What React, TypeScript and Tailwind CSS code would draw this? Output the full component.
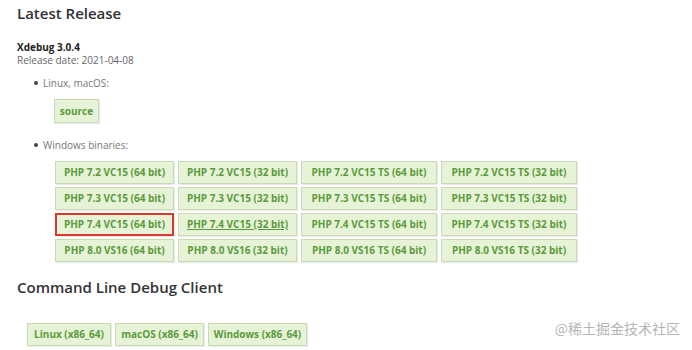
const rows = [
  ["PHP 7.2 VC15 (64 bit)", "PHP 7.2 VC15 (32 bit)", "PHP 7.2 VC15 TS (64 bit)", "PHP 7.2 VC15 TS (32 bit)"],
  ["PHP 7.3 VC15 (64 bit)", "PHP 7.3 VC15 (32 bit)", "PHP 7.3 VC15 TS (64 bit)", "PHP 7.3 VC15 TS (32 bit)"],
  ["PHP 7.4 VC15 (64 bit)", "PHP 7.4 VC15 (32 bit)", "PHP 7.4 VC15 TS (64 bit)", "PHP 7.4 VC15 TS (32 bit)"],
  ["PHP 8.0 VS16 (64 bit)", "PHP 8.0 VS16 (32 bit)", "PHP 8.0 VS16 TS (64 bit)", "PHP 8.0 VS16 TS (32 bit)"],
];

function Btn({ label, className = "" }: { label: string; className?: string }) {
  return (
    <div
      className={
        "h-[23px] flex items-center justify-center bg-[#e6f3d6] border border-[#c9dbb5] shadow-[1px_1px_1px_rgba(0,0,0,0.08)] text-[10px] font-bold text-[#5b9a3c] whitespace-nowrap " +
        className
      }
    >
      {label}
    </div>
  );
}

export default function App() {
  return (
    <main className="w-[692px] h-[350px] bg-white relative overflow-hidden text-[#333]" style={{ fontFamily: '"Open Sans", "Noto Sans", sans-serif' }}>
      <div className="pl-[17px] pt-[2px]">
        <h1 className="text-[15px] leading-[22px] font-semibold text-[#333]">Latest Release</h1>

        <div className="mt-[17px] text-[10px] font-bold leading-[13px] text-[#222]">Xdebug 3.0.4</div>
        <div className="text-[10px] leading-[13px] text-[#666]">Release date: 2021-04-08</div>

        <ul className="mt-[9px] pl-[17px]">
          <li className="flex items-center gap-[5px] text-[10px] leading-[14px] text-[#777]">
            <span className="w-[4px] h-[4px] rounded-full bg-[#444]" />
            Linux, macOS:
          </li>
        </ul>
        <div className="pl-[37px] mt-[9px]">
          <Btn label="source" className="w-[45px] h-[24px]" />
        </div>

        <ul className="mt-[15px] pl-[17px]">
          <li className="flex items-center gap-[5px] text-[10px] leading-[14px] text-[#777]">
            <span className="w-[4px] h-[4px] rounded-full bg-[#444]" />
            Windows binaries:
          </li>
        </ul>

        <div className="pl-[38px] mt-[9px] flex flex-col gap-[3px]">
          {rows.map((r, i) => (
            <div key={i} className="flex gap-[4px]">
              {r.map((label, j) => (
                <Btn
                  key={j}
                  label={label}
                  className={
                    (j === 0 ? "w-[119px] " : j === 1 ? "w-[119px] " : "w-[136px] ") +
                    (i === 2 && j === 0 ? "border-[#d93a2e] border-2 " : "") +
                    (i === 2 && j === 1 ? "underline " : "")
                  }
                />
              ))}
            </div>
          ))}
        </div>

        <h2 className="mt-[14px] text-[15px] leading-[22px] font-semibold text-[#333]">Command Line Debug Client</h2>

        <div className="mt-[25px] pl-[10px] flex gap-[4px]">
          <Btn label="Linux (x86_64)" className="w-[84px]" />
          <Btn label="macOS (x86_64)" className="w-[89px]" />
          <Btn label="Windows (x86_64)" className="w-[99px]" />
        </div>
      </div>

      <div
        className="absolute right-[12px] bottom-[13px] text-[14px] leading-[18px] text-[#b5b5b5]"
        style={{ fontFamily: '"Noto Sans CJK SC", sans-serif' }}
      >
        @稀土掘金技术社区
      </div>
    </main>
  );
}
